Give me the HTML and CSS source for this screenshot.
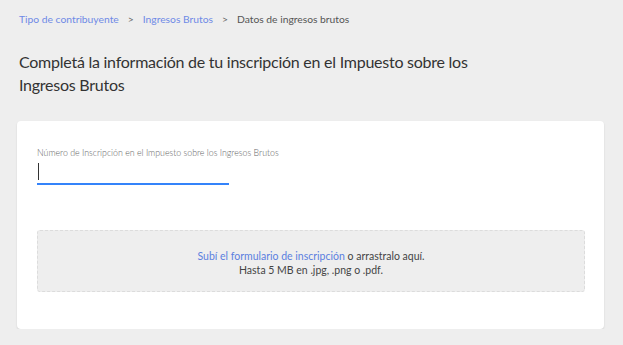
FILE: index.html
```html
<!DOCTYPE html>
<html lang="es">
<head>
  <meta charset="UTF-8" />
  <title>Datos de ingresos brutos</title>
  <link rel="stylesheet" href="styles.css">
</head>
<body>
  <nav class="breadcrumb">
    <a href="#">Tipo de contribuyente</a>
    <span class="sep">&gt;</span>
    <a href="#">Ingresos Brutos</a>
    <span class="sep">&gt;</span>
    <span class="current">Datos de ingresos brutos</span>
  </nav>

  <h1>Completá la información de tu inscripción en el Impuesto sobre los Ingresos Brutos</h1>

  <div class="card">
    <label class="field">
      <span class="label">Número de Inscripción en el Impuesto sobre los Ingresos Brutos</span>
      <span class="input-wrap">
        <span class="caret"></span>
        <input type="text" id="numero" />
      </span>
    </label>

    <div class="dropzone">
      <p><a href="#">Subí el formulario de inscripción</a> o arrastralo aquí.</p>
      <p>Hasta 5 MB en .jpg, .png o .pdf.</p>
    </div>
  </div>
</body>
</html>
```

FILE: styles.css
```css
body {
  font-family: Lato, Arial, sans-serif;
  margin: 0;
  padding: 12px 19px 0 17px;
  background-color: #eeeeee;
  color: #333;
}

.breadcrumb {
  font-size: 10.3px;
  line-height: 14px;
  padding-left: 2px;
  display: flex;
  gap: 9px;
}

.breadcrumb a {
  color: #6f8ae6;
  text-decoration: none;
}

.breadcrumb .sep {
  color: #666;
}

.breadcrumb .current {
  color: #555;
}

h1 {
  max-width: 470px;
  font-size: 16px;
  font-weight: 400;
  letter-spacing: -0.25px;
  line-height: 23px;
  margin: 24px 0 0 2px;
  color: #333;
}

.card {
  background-color: white;
  border-radius: 4px;
  margin-top: 25px;
  padding: 26px 19px 37px 20px;
  box-shadow: 0 1px 2px rgba(0, 0, 0, 0.12);
}

.field {
  display: flex;
  flex-direction: column;
}

.label {
  font-size: 8.8px;
  font-weight: 300;
  line-height: 12px;
  color: #666;
}

.input-wrap {
  display: block;
  position: relative;
  width: 192px;
  margin-top: 3px;
  border-bottom: 2px solid #3483fa;
}

.input-wrap input {
  width: 100%;
  height: 19px;
  border: none;
  outline: none;
  padding: 0;
  background: transparent;
}

.caret {
  position: absolute;
  left: 1px;
  top: 1px;
  width: 1px;
  height: 17px;
  background-color: #333;
}

.dropzone {
  margin-top: 45px;
  background-color: #eeeeee;
  border: 1px dashed #dcdcdc;
  border-radius: 3px;
  padding: 18px 0 14px;
  text-align: center;
  font-size: 10.5px;
  font-weight: 400;
  line-height: 14px;
  color: #444;
}

.dropzone p {
  margin: 0;
}

.dropzone a {
  color: #5b7fe0;
  text-decoration: none;
}
```
